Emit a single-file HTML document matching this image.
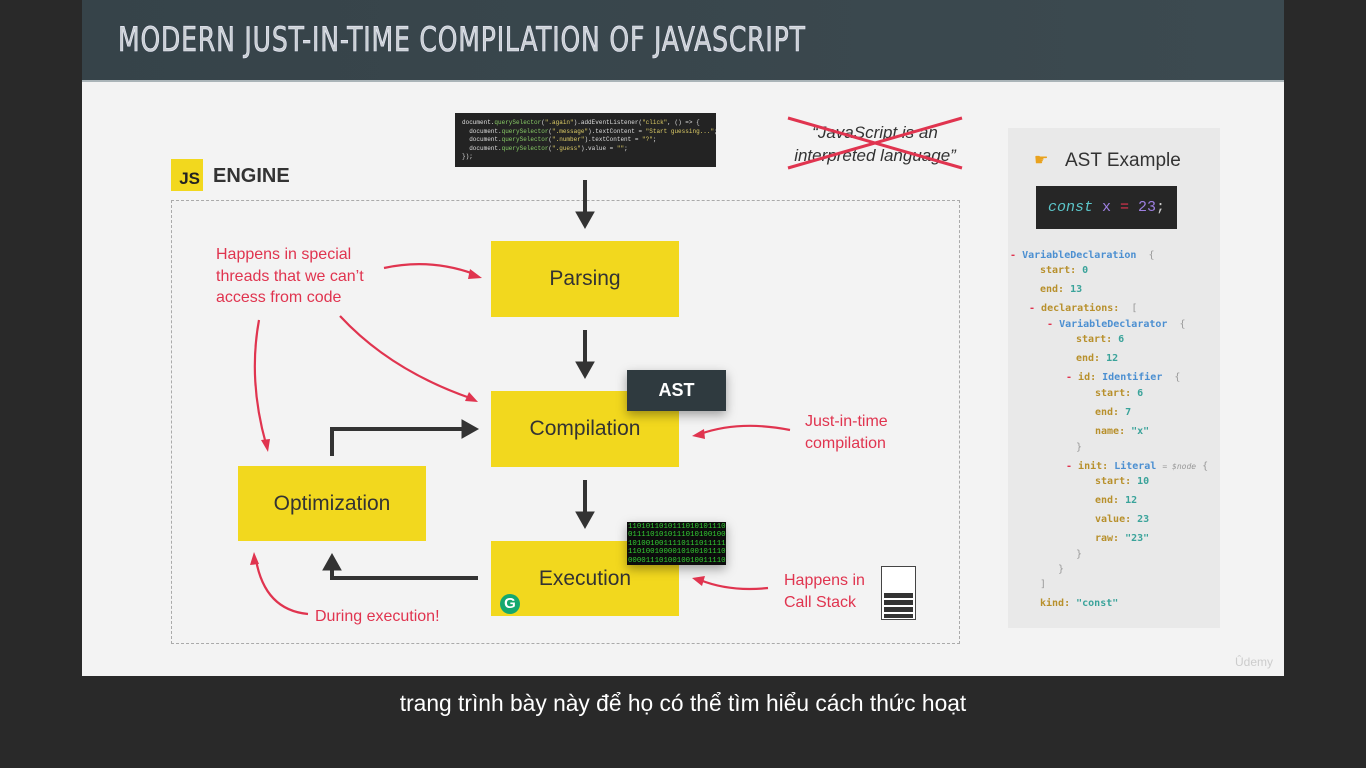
<!DOCTYPE html>
<html><head><meta charset="utf-8"><style>
body{margin:0;width:1366px;height:768px;background:#292929;position:relative;overflow:hidden;font-family:"Liberation Sans",sans-serif}
.a{position:absolute}
.slide{left:82px;top:0;width:1202px;height:676px;background:#f3f3f3}
.hdr{left:82px;top:0;width:1202px;height:80px;background:linear-gradient(90deg,#364349,#3c4a50);border-bottom:2px solid #aab4b8}
.title{left:118px;top:20px;font-family:"DejaVu Sans Condensed","Liberation Sans Narrow",sans-serif;font-size:34px;letter-spacing:1px;transform:scaleX(.82);transform-origin:left;color:#c9cfd2;-webkit-text-stroke:0.6px #eef;white-space:nowrap}
.box{background:#f2d81e;color:#333;font-size:21px;display:flex;align-items:center;justify-content:center}
.red{color:#e0344f;font-size:16px;line-height:21.5px}
.mono{font-family:"Liberation Mono",monospace}
.tree{font-family:"DejaVu Sans Mono",monospace;font-size:10px;color:#b8902c;white-space:pre;font-weight:bold}
.b{color:#4b8fd1}.t{color:#3aa39a}.m{color:#e0344f}.g{color:#999;font-weight:normal}
</style></head><body>
<div class="a slide"></div>
<div class="a hdr"></div>
<div class="a title">MODERN JUST-IN-TIME COMPILATION OF JAVASCRIPT</div>

<div class="a mono" style="left:455px;top:113px;width:261px;height:54px;background:#232323;font-size:6px;line-height:8.5px;color:#ddd;padding:6px 7px;box-sizing:border-box;white-space:pre;overflow:hidden">document.<span style="color:#8c6">querySelector</span>(<span style="color:#dc6">".again"</span>).addEventListener(<span style="color:#dc6">"click"</span>, () => {
  document.<span style="color:#8c6">querySelector</span>(<span style="color:#dc6">".message"</span>).textContent = <span style="color:#dc6">"Start guessing..."</span>;
  document.<span style="color:#8c6">querySelector</span>(<span style="color:#dc6">".number"</span>).textContent = <span style="color:#dc6">"?"</span>;
  document.<span style="color:#8c6">querySelector</span>(<span style="color:#dc6">".guess"</span>).value = <span style="color:#dc6">""</span>;
});</div>

<div class="a" style="left:786px;top:121px;width:178px;text-align:center;font-style:italic;font-size:17px;line-height:23px;color:#333">“JavaScript is an interpreted language”</div>
<svg class="a" style="left:786px;top:114px" width="178" height="58"><path d="M2 4L176 54M2 54L176 4" stroke="#e0344f" stroke-width="3"/></svg>

<div class="a" style="left:171px;top:159px;width:32px;height:32px;background:#f2d81e;font-weight:bold;font-size:17px;color:#222;display:flex;align-items:flex-end;justify-content:flex-end;padding:0 3px 2px 0;box-sizing:border-box">JS</div>
<div class="a" style="left:213px;top:165px;font-size:20px;font-weight:bold;color:#333">ENGINE</div>
<div class="a" style="left:171px;top:200px;width:787px;height:442px;border:1.5px dashed #aaa"></div>

<div class="a box" style="left:491px;top:241px;width:188px;height:76px">Parsing</div>
<div class="a box" style="left:491px;top:391px;width:188px;height:76px">Compilation</div>
<div class="a box" style="left:491px;top:541px;width:188px;height:75px">Execution</div>
<div class="a box" style="left:238px;top:466px;width:188px;height:75px">Optimization</div>
<div class="a" style="left:627px;top:370px;width:99px;height:41px;background:#2f3a3f;color:#fff;font-weight:bold;font-size:18px;display:flex;align-items:center;justify-content:center;box-shadow:0 4px 10px rgba(0,0,0,.35)">AST</div>
<div class="a mono" style="left:627px;top:522px;width:99px;height:43px;background:#0c0c0c;color:#3c3;font-size:7.4px;line-height:8.4px;padding:1px 0 0 1px;box-sizing:border-box;box-shadow:0 4px 10px rgba(0,0,0,.35);overflow:hidden">1101011010111010101110<br>0111101010111010100100<br>1010010011110111011111<br>1101001000010100101110<br>0000111010010010011110</div>
<div class="a" style="left:500px;top:594px;width:20px;height:20px;border-radius:50%;background:#15a86f;color:#fff;font-weight:bold;font-size:15px;text-align:center;line-height:20px">G</div>

<svg class="a" style="left:0;top:0" width="1366" height="768">
<g fill="#333" stroke="#333">
<path d="M585 180V216" stroke-width="4"/><path d="M576 212h18l-9 16z"/>
<path d="M585 330V366" stroke-width="4"/><path d="M576 362h18l-9 16z"/>
<path d="M585 480V516" stroke-width="4"/><path d="M576 512h18l-9 16z"/>
<path d="M332 456V429H464" stroke-width="4" fill="none"/><path d="M462 420v18l16-9z"/>
<path d="M478 578H332V568" stroke-width="4" fill="none"/><path d="M323 570h18l-9-16z"/>
</g>
<g stroke="#e0344f" stroke-width="2.2" fill="none">
<path d="M384 268Q430 258 474 274"/><path d="M340 316Q390 370 470 398"/>
<path d="M259 320Q248 380 266 444"/><path d="M308 614Q265 610 256 560"/>
<path d="M790 430Q740 420 700 434"/><path d="M768 588Q730 592 700 580"/>
</g>
<g fill="#e0344f">
<path d="M482 278l-12-9 -2 10z"/><path d="M478 402l-13-1 4-9z"/><path d="M268 452l-7-12 9-1z"/>
<path d="M254 552l-4 13 9-1z"/><path d="M692 436l12-7 1 10z"/><path d="M692 578l13-2-3 10z"/>
</g>
<rect x="881.5" y="566.5" width="34" height="53" fill="#fff" stroke="#444"/>
<g fill="#333"><rect x="884" y="593" width="29" height="5"/><rect x="884" y="600" width="29" height="5"/><rect x="884" y="607" width="29" height="5"/><rect x="884" y="614" width="29" height="4"/></g>
</svg>

<div class="a red" style="left:216px;top:244px">Happens in special<br>threads that we can’t<br>access from code</div>
<div class="a red" style="left:805px;top:411px">Just-in-time<br>compilation</div>
<div class="a red" style="left:784px;top:570px">Happens in<br>Call Stack</div>
<div class="a red" style="left:315px;top:606px">During execution!</div>

<div class="a" style="left:1008px;top:128px;width:212px;height:500px;background:#e9e9e9"></div>
<div class="a" style="left:1034px;top:150px;font-size:16px;color:#e9a21e">☛</div>
<div class="a" style="left:1065px;top:150px;font-size:19px;color:#333">AST Example</div>
<div class="a mono" style="left:1036px;top:186px;width:141px;height:43px;background:#262626;font-size:15px;line-height:43px;text-align:center"><i style="color:#5bc5c9">const</i> <span style="color:#9d7fe0">x</span> <span style="color:#e0344f">=</span> <span style="color:#9d7fe0">23</span><span style="color:#ccc">;</span></div>

<div class="a tree" style="left:1010px;top:250px"><span class="m">-</span> <span class="b">VariableDeclaration</span>  <span class="g">{</span></div>
<div class="a tree" style="left:1040px;top:265px">start: <span class="t">0</span></div>
<div class="a tree" style="left:1040px;top:284px">end: <span class="t">13</span></div>
<div class="a tree" style="left:1029px;top:303px"><span class="m">-</span> declarations:  <span class="g">[</span></div>
<div class="a tree" style="left:1047px;top:319px"><span class="m">-</span> <span class="b">VariableDeclarator</span>  <span class="g">{</span></div>
<div class="a tree" style="left:1076px;top:334px">start: <span class="t">6</span></div>
<div class="a tree" style="left:1076px;top:353px">end: <span class="t">12</span></div>
<div class="a tree" style="left:1066px;top:372px"><span class="m">-</span> id: <span class="b">Identifier</span>  <span class="g">{</span></div>
<div class="a tree" style="left:1095px;top:388px">start: <span class="t">6</span></div>
<div class="a tree" style="left:1095px;top:407px">end: <span class="t">7</span></div>
<div class="a tree" style="left:1095px;top:426px">name: <span class="t">"x"</span></div>
<div class="a tree" style="left:1076px;top:442px"><span class="g">}</span></div>
<div class="a tree" style="left:1066px;top:461px"><span class="m">-</span> init: <span class="b">Literal</span> <span class="g" style="font-size:8px;font-style:italic">= $node</span> <span class="g">{</span></div>
<div class="a tree" style="left:1095px;top:476px">start: <span class="t">10</span></div>
<div class="a tree" style="left:1095px;top:495px">end: <span class="t">12</span></div>
<div class="a tree" style="left:1095px;top:514px">value: <span class="t">23</span></div>
<div class="a tree" style="left:1095px;top:533px">raw: <span class="t">"23"</span></div>
<div class="a tree" style="left:1076px;top:549px"><span class="g">}</span></div>
<div class="a tree" style="left:1058px;top:564px"><span class="g">}</span></div>
<div class="a tree" style="left:1040px;top:579px"><span class="g">]</span></div>
<div class="a tree" style="left:1040px;top:598px">kind: <span class="t">"const"</span></div>

<div class="a" style="left:1235px;top:655px;font-size:12px;color:#ccc">Ûdemy</div>
<div class="a" style="left:0;top:690px;width:1366px;text-align:center;color:#fff;font-size:22.8px">trang trình bày này để họ có thể tìm hiểu cách thức hoạt</div>
</body></html>
